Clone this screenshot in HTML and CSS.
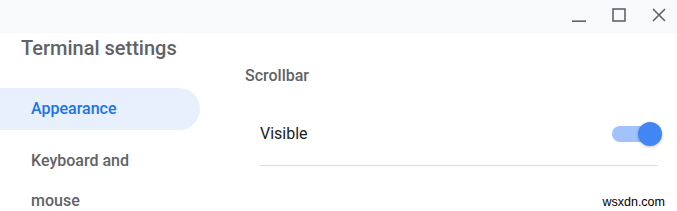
FILE: index.html
```html
<!DOCTYPE html>
<html lang="en">
<head>
  <meta charset="UTF-8">
  <title>Terminal settings</title>
  <link rel="stylesheet" href="styles.css">
</head>
<body>
  <div class="titlebar">
    <svg class="winbtn" width="14" height="14" viewBox="0 0 14 14"><path d="M0 13.2H14" /></svg>
    <svg class="winbtn" width="14" height="14" viewBox="0 0 14 14"><rect x="1" y="1" width="12" height="12" /></svg>
    <svg class="winbtn" width="14" height="14" viewBox="0 0 14 14"><path d="M1 1L13 13M13 1L1 13" /></svg>
  </div>

  <div class="main">
    <div class="sidebar">
      <div class="title">Terminal settings</div>
      <div class="nav">
        <div class="nav-item active">Appearance</div>
        <div class="nav-item">Keyboard and<br>mouse</div>
      </div>
    </div>

    <div class="content">
      <div class="section-title">Scrollbar</div>
      <div class="row">
        <span class="label">Visible</span>
        <div class="switch">
          <div class="track"></div>
          <div class="thumb"></div>
        </div>
      </div>
    </div>
  </div>

  <div class="watermark">wsxdn.com</div>
</body>
</html>
```

FILE: styles.css
```css
body {
  margin: 0;
  background: #fff;
  font-family: Roboto, "Noto Sans", Arial, sans-serif;
  width: 677px;
  height: 211px;
  overflow: hidden;
  position: relative;
}
.titlebar {
  height: 33px;
  background: #f8f9fb;
  display: flex;
  justify-content: flex-end;
  align-items: flex-start;
  gap: 26px;
  padding: 8px 11px 0 0;
  box-sizing: border-box;
}
.winbtn {
  fill: none;
  stroke: #5f6368;
  stroke-width: 1.6;
}
.main {
  display: flex;
  height: 178px;
  overflow: hidden;
}
.sidebar {
  width: 200px;
  flex-shrink: 0;
}
.title {
  margin: 3px 0 0 21px;
  font-size: 20px;
  line-height: 24px;
  color: #5f6368;
  font-weight: 500;
}
.nav {
  margin-top: 28px;
  display: flex;
  flex-direction: column;
  gap: 10px;
}
.nav-item {
  padding: 1px 0 1px 31px;
  font-size: 16px;
  line-height: 40px;
  color: #5f6368;
  font-weight: 500;
}
.nav-item.active {
  background: #e8f0fe;
  color: #1a73e8;
  border-radius: 0 21px 21px 0;
}
.content {
  flex: 1;
  padding: 33px 19px 0 45px;
}
.section-title {
  font-size: 16px;
  line-height: 20px;
  color: #5f6368;
  font-weight: 500;
}
.row {
  margin: 16px 0 0 15px;
  height: 63px;
  border-bottom: 1px solid #dadce0;
  display: flex;
  align-items: center;
  justify-content: space-between;
}
.label {
  font-size: 16px;
  color: #202124;
}
.switch {
  position: relative;
  width: 50px;
  height: 24px;
  margin-right: -4px;
}
.track {
  position: absolute;
  left: 0;
  top: 4px;
  width: 44px;
  height: 16px;
  border-radius: 8px;
  background: #a1c2fa;
}
.thumb {
  position: absolute;
  right: 0;
  top: 0;
  width: 24px;
  height: 24px;
  border-radius: 50%;
  background: #4285f4;
  box-shadow: 0 1px 3px rgba(0, 0, 0, 0.25);
}
.watermark {
  position: absolute;
  right: 12px;
  bottom: 2px;
  font-family: "Liberation Sans", Arial, sans-serif;
  font-size: 12.5px;
  color: #000;
}
```
